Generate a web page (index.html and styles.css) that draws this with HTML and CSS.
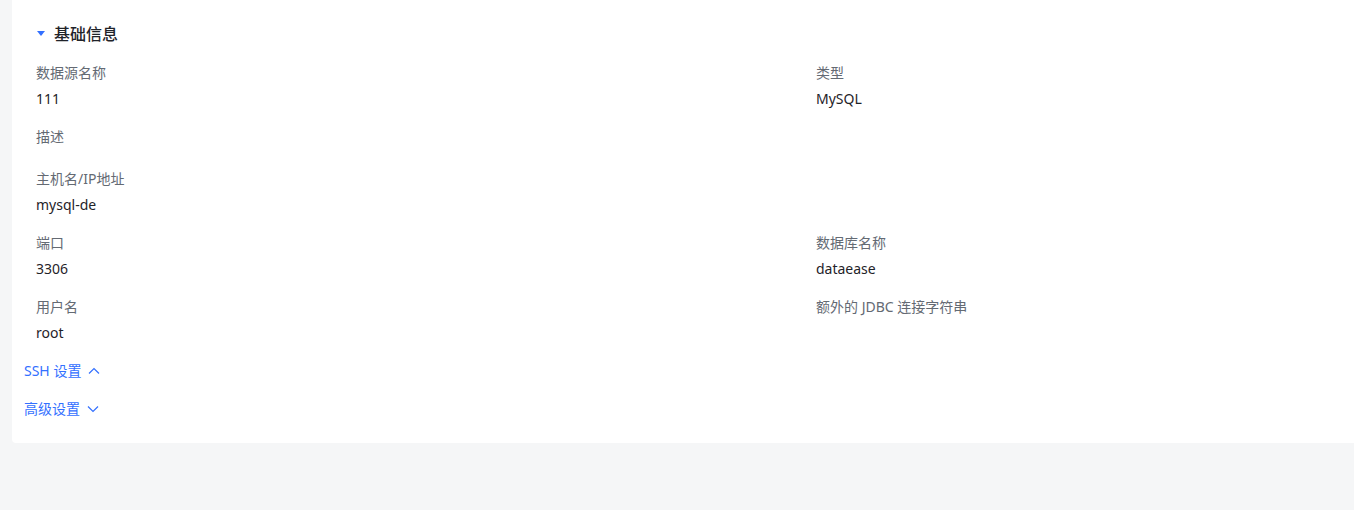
FILE: index.html
```html
<!DOCTYPE html>
<html lang="zh-CN">
  <head>
    <meta charset="UTF-8" />
    <title>数据源详情</title>
    <link rel="stylesheet" href="styles.css">
  </head>
  <body>
    <div class="detail-card">
      <div class="section-title">
        <svg class="caret" width="8" height="5" viewBox="0 0 8 5"><path d="M0 0h8L4 5z" fill="#3370ff"/></svg>
        <span>基础信息</span>
      </div>
      <div class="form-grid">
        <div class="form-item">
          <div class="item-label">数据源名称</div>
          <div class="item-value">111</div>
        </div>
        <div class="form-item">
          <div class="item-label">类型</div>
          <div class="item-value">MySQL</div>
        </div>
        <div class="form-item full">
          <div class="item-label">描述</div>
          <div class="item-value empty"></div>
        </div>
        <div class="form-item full">
          <div class="item-label">主机名/IP地址</div>
          <div class="item-value">mysql-de</div>
        </div>
        <div class="form-item">
          <div class="item-label">端口</div>
          <div class="item-value">3306</div>
        </div>
        <div class="form-item">
          <div class="item-label">数据库名称</div>
          <div class="item-value">dataease</div>
        </div>
        <div class="form-item">
          <div class="item-label">用户名</div>
          <div class="item-value">root</div>
        </div>
        <div class="form-item">
          <div class="item-label">额外的 JDBC 连接字符串</div>
          <div class="item-value empty"></div>
        </div>
      </div>
      <a class="toggle-link">SSH 设置
        <svg width="12" height="8" viewBox="0 0 12 8"><path d="M1 6.5L6 1.5l5 5" fill="none" stroke="#3370ff" stroke-width="1.2"/></svg>
      </a>
      <a class="toggle-link">高级设置
        <svg width="12" height="8" viewBox="0 0 12 8"><path d="M1 1.5L6 6.5l5-5" fill="none" stroke="#3370ff" stroke-width="1.2"/></svg>
      </a>
    </div>
  </body>
</html>
```

FILE: styles.css
```css
body {
  margin: 0;
  background-color: #f5f6f7;
  font-family: "Noto Sans", "Noto Sans CJK SC", sans-serif;
  font-size: 14px;
  color: #1f2329;
  height: 510px;
  overflow: hidden;
}
.detail-card {
  margin-left: 12px;
  background: white;
  border-radius: 0 0 0 4px;
  padding: 21px 12px 23px 12px;
}
.section-title {
  display: flex;
  align-items: center;
  height: 24px;
  padding-left: 13px;
  font-size: 16px;
  font-weight: 500;
  margin-bottom: 17px;
}
.caret {
  margin-right: 9px;
}
.form-grid {
  display: grid;
  grid-template-columns: 780px 1fr;
  padding-left: 12px;
}
.form-item {
  margin-bottom: 16px;
}
.form-item.full {
  grid-column: 1 / -1;
}
.item-label {
  color: #646a73;
  line-height: 22px;
  height: 22px;
  margin-bottom: 4px;
}
.item-value {
  line-height: 22px;
  height: 22px;
}
.item-value.empty {
  height: 0;
}
.toggle-link {
  display: flex;
  align-items: center;
  gap: 7px;
  width: fit-content;
  height: 22px;
  color: #3370ff;
  line-height: 22px;
  cursor: pointer;
}
.toggle-link + .toggle-link {
  margin-top: 16px;
}
```
